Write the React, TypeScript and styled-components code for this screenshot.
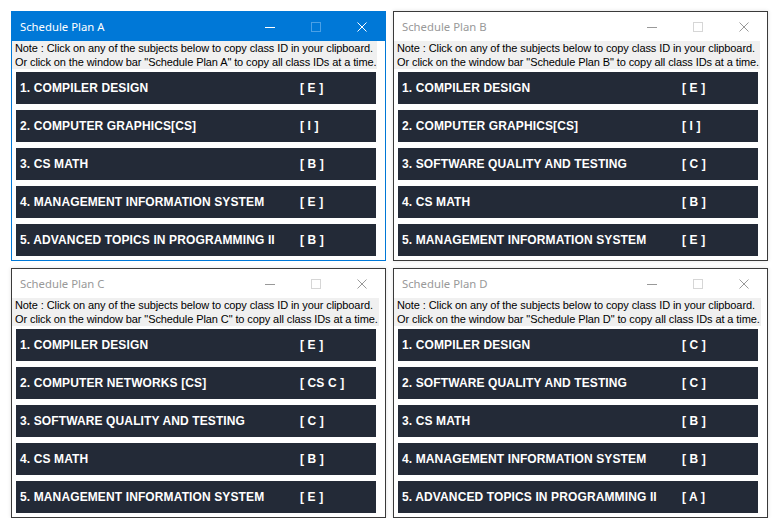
import React from "react";
import styled, { createGlobalStyle } from "styled-components";

const GlobalStyle = createGlobalStyle`
  html, body {
    margin: 0;
    padding: 0;
    background: #ffffff;
  }
  * { box-sizing: border-box; }
`;

type Subject = { name: string; code: string };
type Plan = { id: string; active?: boolean; subjects: Subject[] };

const plans: Plan[] = [
  {
    id: "A",
    active: true,
    subjects: [
      { name: "1. COMPILER DESIGN", code: "[ E ]" },
      { name: "2. COMPUTER GRAPHICS[CS]", code: "[ I ]" },
      { name: "3. CS MATH", code: "[ B ]" },
      { name: "4. MANAGEMENT INFORMATION SYSTEM", code: "[ E ]" },
      { name: "5. ADVANCED TOPICS IN PROGRAMMING II", code: "[ B ]" },
    ],
  },
  {
    id: "B",
    subjects: [
      { name: "1. COMPILER DESIGN", code: "[ E ]" },
      { name: "2. COMPUTER GRAPHICS[CS]", code: "[ I ]" },
      { name: "3. SOFTWARE QUALITY AND TESTING", code: "[ C ]" },
      { name: "4. CS MATH", code: "[ B ]" },
      { name: "5. MANAGEMENT INFORMATION SYSTEM", code: "[ E ]" },
    ],
  },
  {
    id: "C",
    subjects: [
      { name: "1. COMPILER DESIGN", code: "[ E ]" },
      { name: "2. COMPUTER NETWORKS [CS]", code: "[ CS C ]" },
      { name: "3. SOFTWARE QUALITY AND TESTING", code: "[ C ]" },
      { name: "4. CS MATH", code: "[ B ]" },
      { name: "5. MANAGEMENT INFORMATION SYSTEM", code: "[ E ]" },
    ],
  },
  {
    id: "D",
    subjects: [
      { name: "1. COMPILER DESIGN", code: "[ C ]" },
      { name: "2. SOFTWARE QUALITY AND TESTING", code: "[ C ]" },
      { name: "3. CS MATH", code: "[ B ]" },
      { name: "4. MANAGEMENT INFORMATION SYSTEM", code: "[ B ]" },
      { name: "5. ADVANCED TOPICS IN PROGRAMMING II", code: "[ A ]" },
    ],
  },
];

const Desktop = styled.div`
  display: grid;
  grid-template-columns: 375px 375px;
  grid-auto-rows: 250px;
  column-gap: 7px;
  row-gap: 7px;
  padding: 11px 0 0 11px;
`;

const Window = styled.div<{ $active?: boolean }>`
  display: flex;
  flex-direction: column;
  border: 1px solid ${(p) => (p.$active ? "#0078d7" : "#3a3a3a")};
  background: #ffffff;
  box-shadow: ${(p) => (p.$active ? "none" : "0 0 4px rgba(0,0,0,0.12)")};
  overflow: hidden;
`;

const TitleBar = styled.div<{ $active?: boolean }>`
  display: flex;
  align-items: center;
  height: 29px;
  flex-shrink: 0;
  background: ${(p) => (p.$active ? "#0078d7" : "#ffffff")};
`;

const Title = styled.div<{ $active?: boolean }>`
  flex: 1;
  padding-left: 8px;
  font-family: "Noto Sans", "Open Sans", sans-serif;
  font-size: 11.3px;
  color: ${(p) => (p.$active ? "#ffffff" : "#999999")};
  white-space: nowrap;
`;

const CaptionButton = styled.div`
  width: 46px;
  height: 29px;
  display: flex;
  align-items: center;
  justify-content: center;
`;

const Note = styled.div`
  align-self: flex-start;
  background: #f0f0f0;
  padding: 0 1px 0 3px;
  height: 28px;
  font-family: "Liberation Sans", Arial, sans-serif;
  font-size: 11px;
  letter-spacing: -0.1px;
  line-height: 14px;
  color: #000000;
  white-space: nowrap;
`;

const List = styled.div`
  display: flex;
  flex-direction: column;
  gap: 6px;
  padding: 3px 0 0 4px;
`;

const Bar = styled.div`
  display: flex;
  align-items: center;
  width: 360px;
  height: 32px;
  padding-left: 4px;
  background: #232a37;
  color: #ffffff;
  font-family: "Liberation Sans", Arial, sans-serif;
  font-weight: bold;
  font-size: 12px;
  letter-spacing: 0.12px;
  white-space: nowrap;
  cursor: pointer;
`;

const SubjectName = styled.span`
  width: 280px;
  flex-shrink: 0;
`;

const Code = styled.span``;

const MinIcon = ({ color }: { color: string }) => (
  <svg width="10" height="10" viewBox="0 0 10 10">
    <rect x="0" y="5" width="10" height="1" fill={color} />
  </svg>
);

const MaxIcon = ({ color }: { color: string }) => (
  <svg width="10" height="10" viewBox="0 0 10 10">
    <rect x="0.5" y="0.5" width="9" height="9" fill="none" stroke={color} strokeWidth="1" />
  </svg>
);

const CloseIcon = ({ color }: { color: string }) => (
  <svg width="10" height="10" viewBox="0 0 10 10">
    <path d="M0.5 0.5 L9.5 9.5 M9.5 0.5 L0.5 9.5" stroke={color} strokeWidth="1" fill="none" />
  </svg>
);

const PlanWindow = ({ plan }: { plan: Plan }) => {
  const a = !!plan.active;
  const glyph = a ? "#ffffff" : "#999999";
  const maxGlyph = a ? "#4aa0e6" : "#d6d6d6";
  return (
    <Window $active={a}>
      <TitleBar $active={a}>
        <Title $active={a}>Schedule Plan {plan.id}</Title>
        <CaptionButton>
          <MinIcon color={glyph} />
        </CaptionButton>
        <CaptionButton>
          <MaxIcon color={maxGlyph} />
        </CaptionButton>
        <CaptionButton>
          <CloseIcon color={glyph} />
        </CaptionButton>
      </TitleBar>
      <Note>
        Note : Click on any of the subjects below to copy class ID in your clipboard.
        <br />
        Or click on the window bar "Schedule Plan {plan.id}" to copy all class IDs at a time.
      </Note>
      <List>
        {plan.subjects.map((s) => (
          <Bar key={s.name}>
            <SubjectName>{s.name}</SubjectName>
            <Code>{s.code}</Code>
          </Bar>
        ))}
      </List>
    </Window>
  );
};

export default function App() {
  return (
    <>
      <GlobalStyle />
      <Desktop>
        {plans.map((p) => (
          <PlanWindow key={p.id} plan={p} />
        ))}
      </Desktop>
    </>
  );
}
